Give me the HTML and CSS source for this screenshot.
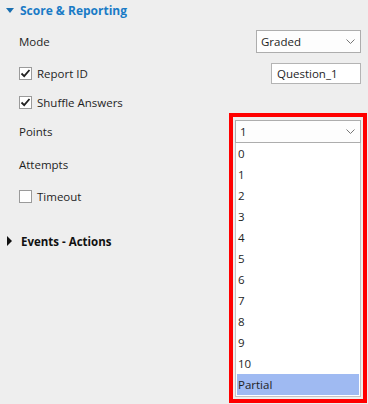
FILE: index.html
```html
<!DOCTYPE html>
<html lang="en">
<head>
    <meta charset="UTF-8">
    <title>Score &amp; Reporting</title>
    <link rel="stylesheet" href="styles.css">
</head>
<body>
    <div class="panel">
        <!-- Section header -->
        <div class="section-head open">
            <span class="arrow-down"></span>
            <span class="section-title">Score &amp; Reporting</span>
        </div>

        <div class="row row-mode">
            <span class="label">Mode</span>
            <div class="select select-mode">
                <span>Graded</span>
                <svg class="chev" width="9" height="6" viewBox="0 0 9 6"><path d="M0.5 0.5 L4.5 4.5 L8.5 0.5" fill="none" stroke="#777" stroke-width="1"/></svg>
            </div>
        </div>

        <div class="row row-report">
            <label class="check"><span class="box checked"><svg width="11" height="11" viewBox="0 0 11 11"><path d="M1.5 5.5 L4.2 8.2 L9.5 2" fill="none" stroke="#222" stroke-width="1.8"/></svg></span>Report ID</label>
            <div class="textbox">Question_1</div>
        </div>

        <div class="row row-shuffle">
            <label class="check"><span class="box checked"><svg width="11" height="11" viewBox="0 0 11 11"><path d="M1.5 5.5 L4.2 8.2 L9.5 2" fill="none" stroke="#222" stroke-width="1.8"/></svg></span>Shuffle Answers</label>
        </div>

        <div class="row row-points">
            <span class="label">Points</span>
            <div class="dropdown">
                <div class="select select-points">
                    <span>1</span>
                    <svg class="chev" width="9" height="6" viewBox="0 0 9 6"><path d="M0.5 0.5 L4.5 4.5 L8.5 0.5" fill="none" stroke="#777" stroke-width="1"/></svg>
                </div>
                <ul class="options">
                    <li>0</li>
                    <li>1</li>
                    <li>2</li>
                    <li>3</li>
                    <li>4</li>
                    <li>5</li>
                    <li>6</li>
                    <li>7</li>
                    <li>8</li>
                    <li>9</li>
                    <li>10</li>
                    <li class="active">Partial</li>
                </ul>
                <div class="highlight-frame"></div>
            </div>
        </div>

        <div class="row row-attempts">
            <span class="label">Attempts</span>
        </div>

        <div class="row row-timeout">
            <label class="check"><span class="box"></span>Timeout</label>
        </div>

        <div class="section-head closed">
            <span class="arrow-right"></span>
            <span class="section-title dark">Events - Actions</span>
        </div>
    </div>
</body>
</html>
```

FILE: styles.css
```css
html, body {
    margin: 0;
    padding: 0;
    background-color: #eeeeee;
}
body {
    font-family: "Open Sans", "Noto Sans", Arial, sans-serif;
    font-size: 11.5px;
    color: #1e1e1e;
    width: 368px;
    height: 404px;
    overflow: hidden;
}
.panel {
    padding: 0 7px 0 0;
    display: flex;
    flex-direction: column;
}
.section-head {
    display: flex;
    align-items: center;
    height: 20px;
}
.section-title {
    font-weight: bold;
    font-size: 12px;
    color: #1a7bc6;
    margin-left: 6px;
}
.section-title.dark {
    color: #111;
    font-size: 11.5px;
}
.arrow-down {
    margin-left: 6px;
    width: 0;
    height: 0;
    border-left: 4.5px solid transparent;
    border-right: 4.5px solid transparent;
    border-top: 5px solid #1a6fb0;
}
.arrow-right {
    margin-left: 7px;
    margin-right: 3px;
    width: 0;
    height: 0;
    border-top: 5px solid transparent;
    border-bottom: 5px solid transparent;
    border-left: 5px solid #111;
}
.closed {
    margin-top: 24px;
}
.row {
    display: flex;
    align-items: center;
    justify-content: space-between;
    padding-left: 19px;
}
.row-mode { margin-top: 10px; height: 23px; }
.row-report { margin-top: 9px; height: 22px; }
.row-shuffle { margin-top: 7px; height: 22px; }
.row-points { margin-top: 7px; height: 23px; }
.row-attempts { margin-top: 11px; height: 22px; }
.row-timeout { margin-top: 10px; height: 21px; }

.label {
    line-height: 16px;
}
.check {
    display: flex;
    align-items: center;
}
.box {
    width: 11px;
    height: 11px;
    border: 1px solid #9a9a9a;
    background-color: #fff;
    margin-right: 5px;
    display: flex;
    align-items: center;
    justify-content: center;
}
.select {
    box-sizing: border-box;
    height: 23px;
    border: 1px solid #adadad;
    background-color: #fdfdfd;
    display: flex;
    align-items: center;
    justify-content: space-between;
    padding: 0 5px 0 4px;
}
.select-mode {
    width: 105px;
}
.select-points {
    width: 126px;
}
.chev {
    display: block;
}
.textbox {
    box-sizing: border-box;
    width: 90px;
    height: 21px;
    border: 1px solid #b4b4b4;
    background-color: #fff;
    padding: 0 5px;
    display: flex;
    align-items: center;
}
.dropdown {
    position: relative;
    width: 126px;
}
.options {
    position: absolute;
    left: 0;
    top: 23px;
    width: 126px;
    box-sizing: border-box;
    margin: 0;
    padding: 0 1px 1px;
    list-style: none;
    background-color: #fff;
    border: 1px solid #c4c4c4;
    border-top: none;
}
.options li {
    height: 21px;
    line-height: 21px;
    padding-left: 1px;
}
.options li.active {
    background-color: #9fbaf2;
}
.highlight-frame {
    position: absolute;
    left: -6px;
    top: -7px;
    width: 138px;
    height: 290px;
    box-sizing: border-box;
    border: 4px solid #ff0000;
}
```
